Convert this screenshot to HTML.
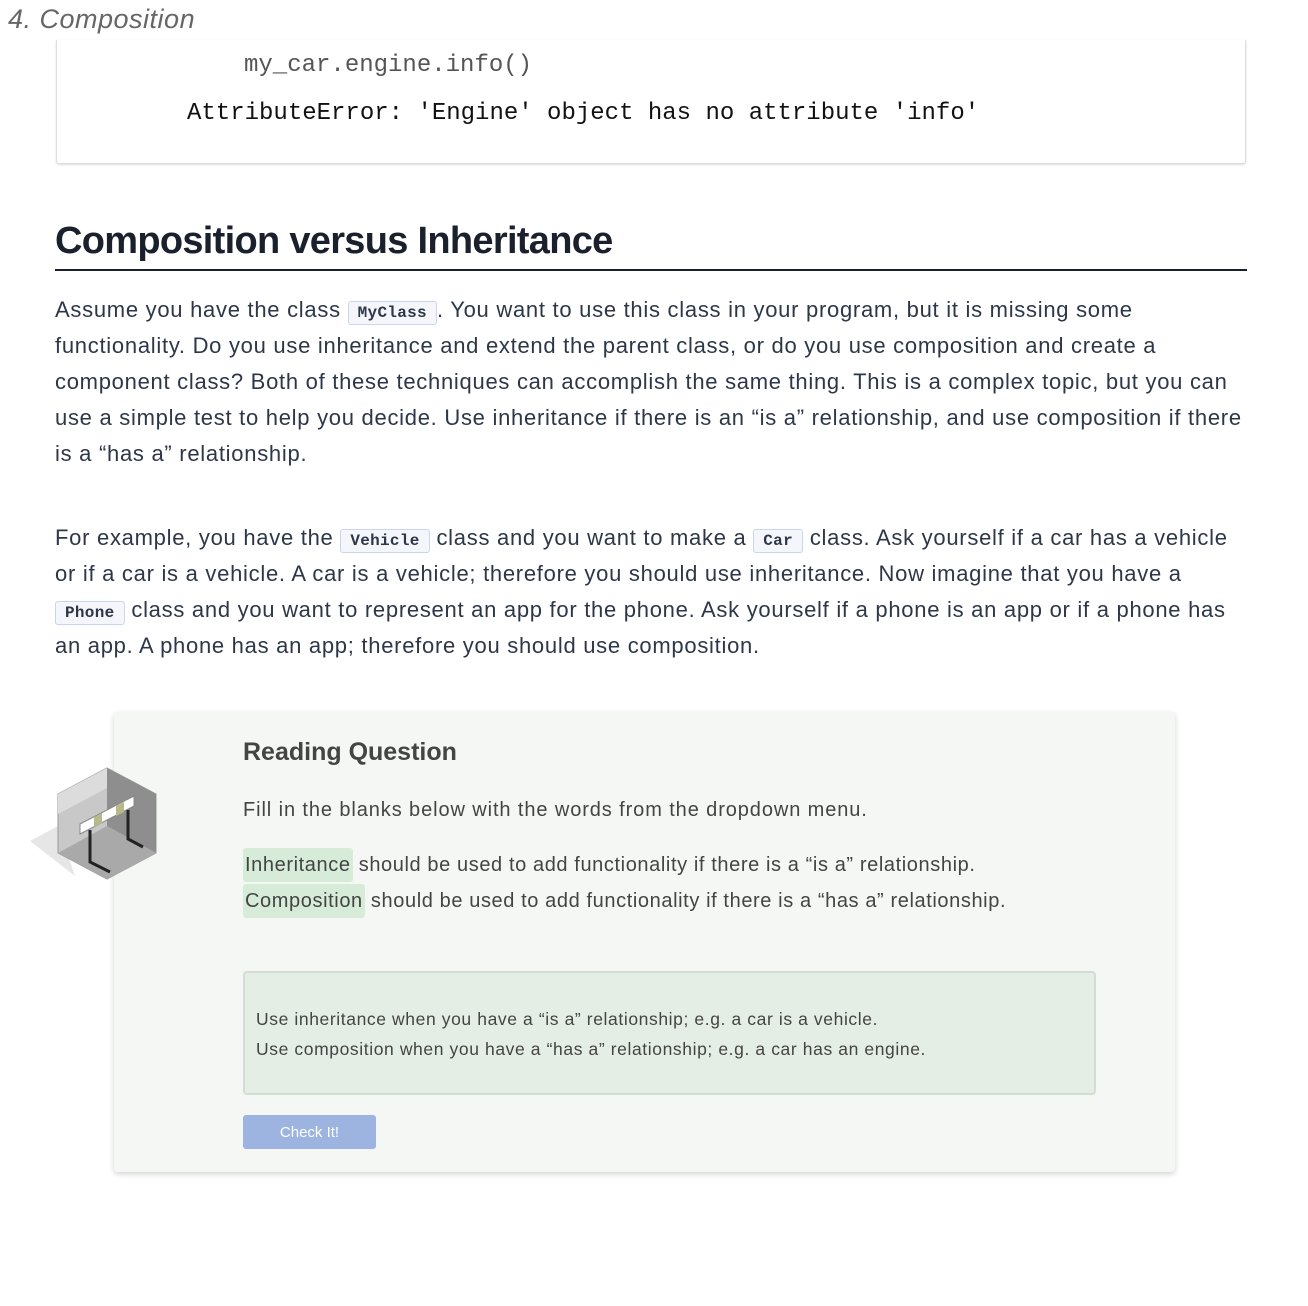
<!DOCTYPE html>
<html><head><meta charset="utf-8"><style>
body{margin:0;width:1308px;height:1306px;background:#fff;font-family:"Liberation Sans",sans-serif;position:relative;overflow:hidden}
.a{position:absolute;white-space:nowrap}
.title{left:8px;top:4px;font-size:27px;font-style:italic;color:#666;letter-spacing:0.5px}
.code{position:absolute;left:56px;top:40px;width:1188px;height:123px;border:1px solid #ddd;border-top:none;border-radius:0 0 3px 3px;box-shadow:0 1px 2px #ddd}
.mono{font-family:"Liberation Mono",monospace;font-size:24px}
h2{position:absolute;left:55px;top:220px;margin:0;font-size:38px;font-weight:bold;color:#1a202c;width:1192px;border-bottom:2px solid #1a202c;padding-bottom:6px;letter-spacing:-0.7px}
.p{position:absolute;left:55px;width:1200px;font-size:22px;line-height:36px;color:#2d3748;letter-spacing:0.72px}
.p div{white-space:nowrap;height:36px}
code{font-family:"Liberation Mono",monospace;font-size:16px;line-height:1;font-weight:bold;background:#f4f6fb;border:1px solid #c9d6ee;border-radius:3px;padding:2px 9px;color:#2d3748;letter-spacing:0.3px}
.card{position:absolute;left:114px;top:712px;width:1061px;height:460px;background:#f5f7f4;border-radius:4px;box-shadow:0 2px 6px rgba(0,0,0,.18)}
.hl{background:#d6ecd9;border-radius:3px;padding:6px 2px}
.ct{font-size:20px;color:#444;letter-spacing:0.6px}
</style></head><body>
<div class="a title">4. Composition</div>
<div class="code">
<div class="a mono" style="left:187px;top:12px;color:#555">my_car.engine.info()</div>
<div class="a mono" style="left:130px;top:60px;color:#111">AttributeError: 'Engine' object has no attribute 'info'</div>
</div>
<h2>Composition versus Inheritance</h2>
<div class="p" style="top:292px">
<div>Assume you have the class <code>MyClass</code>. You want to use this class in your program, but it is missing some</div>
<div>functionality. Do you use inheritance and extend the parent class, or do you use composition and create a</div>
<div>component class? Both of these techniques can accomplish the same thing. This is a complex topic, but you can</div>
<div>use a simple test to help you decide. Use inheritance if there is an “is a” relationship, and use composition if there</div>
<div>is a “has a” relationship.</div>
</div>
<div class="p" style="top:520px">
<div>For example, you have the <code>Vehicle</code> class and you want to make a <code>Car</code> class. Ask yourself if a car has a vehicle</div>
<div>or if a car is a vehicle. A car is a vehicle; therefore you should use inheritance. Now imagine that you have a</div>
<div><code>Phone</code> class and you want to represent an app for the phone. Ask yourself if a phone is an app or if a phone has</div>
<div>an app. A phone has an app; therefore you should use composition.</div>
</div>
<div class="card">
<div class="a" style="left:129px;top:26px;font-size:25px;font-weight:bold;color:#444">Reading Question</div>
<div class="a ct" style="left:129px;top:87px;letter-spacing:0.9px">Fill in the blanks below with the words from the dropdown menu.</div>
<div class="a ct" style="left:129px;top:142px"><span class="hl">Inheritance</span> should be used to add functionality if there is a “is a” relationship.</div>
<div class="a ct" style="left:129px;top:178px"><span class="hl">Composition</span> should be used to add functionality if there is a “has a” relationship.</div>
<div style="position:absolute;left:129px;top:259px;width:849px;height:120px;background:#e5eee5;border:2px solid #d5dcd5;border-radius:4px">
<div class="a" style="left:11px;top:31px;font-size:17.5px;line-height:30px;color:#444;letter-spacing:0.6px">Use inheritance when you have a “is a” relationship; e.g. a car is a vehicle.<br>Use composition when you have a “has a” relationship; e.g. a car has an engine.</div>
</div>
<div style="position:absolute;left:129px;top:403px;width:133px;height:34px;background:#9db4e1;border-radius:3px;color:#fff;font-size:15px;line-height:36px;text-align:center">Check It!</div>
</div>
<svg style="position:absolute;left:30px;top:766px" width="130" height="116" viewBox="0 0 130 116">
<polygon points="0,75 28,60 45,110" fill="#e6e6e6"/>
<polygon points="77,2 126,28 126,87 77,113 28,87 28,28" fill="#c8c8c8" stroke="#999"/>
<polygon points="77,2 126,28 126,87 77,60" fill="#8e8e8e"/>
<polygon points="28,87 77,60 126,87 77,113" fill="#a9a9a9"/>
<polygon points="28,28 77,2 77,22 28,48" fill="#dcdcdc"/>
<polygon points="50,58 104,30 104,40 50,68" fill="#fff" stroke="#888"/>
<polygon points="64,51 72,47 72,57 64,61" fill="#b8b88a"/>
<polygon points="86,40 94,36 94,46 86,50" fill="#b8b88a"/>
<path d="M60,64 L60,96 L80,106 M98,44 L98,73 L113,81" stroke="#222" stroke-width="3" fill="none"/>
</svg>
</body></html>
